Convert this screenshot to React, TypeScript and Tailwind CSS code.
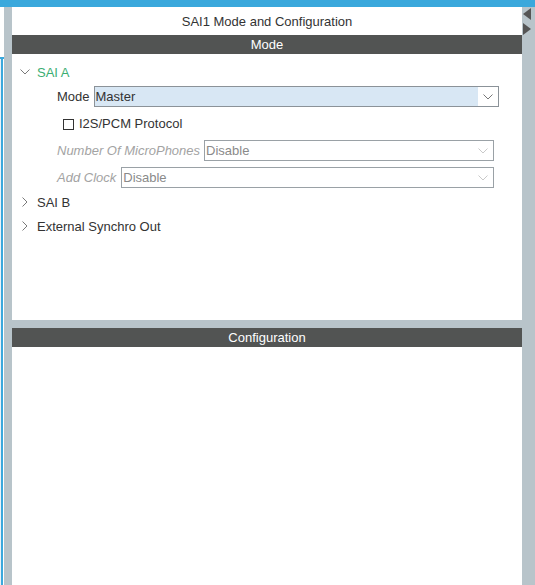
import React from "react";

const font = { fontFamily: '"Liberation Sans", Arial, sans-serif' };

const ChevronDown = ({ color = "#7a7a7a" }: { color?: string }) => (
  <svg width="10" height="6" viewBox="0 0 10 6" fill="none">
    <path d="M0.5 0.5 L5 5 L9.5 0.5" stroke={color} strokeWidth="1" />
  </svg>
);

const ChevronRight = () => (
  <svg width="6" height="10" viewBox="0 0 6 10" fill="none">
    <path d="M0.5 0.5 L5 5 L0.5 9.5" stroke="#7a7a7a" strokeWidth="1" />
  </svg>
);

type SelectProps = {
  value: string;
  active?: boolean;
};

const Select = ({ value, active }: SelectProps) => (
  <div
    className={`flex h-full flex-1 items-center border ${
      active ? "border-[#8b9298] bg-[#d8e7f4]" : "border-[#9aa1a6] bg-white"
    }`}
  >
    <span
      className={`flex-1 pl-[1px] pt-[1px] text-[13px] ${
        active ? "text-[#333333]" : "text-[#8a8a8a]"
      }`}
    >
      {value}
    </span>
    <div
      className={`flex h-full w-[20px] items-center justify-center ${
        active ? "bg-white" : ""
      }`}
    >
      <ChevronDown color={active ? "#777777" : "#c9c9c9"} />
    </div>
  </div>
);

const TreeNode = ({ label, open, green }: { label: string; open?: boolean; green?: boolean }) => (
  <div className="flex h-[24px] items-center pl-[8px]">
    <div className="flex w-[17px] items-center">
      {open ? <ChevronDown /> : <span className="pl-[2px]"><ChevronRight /></span>}
    </div>
    <span className={`pt-[1px] text-[13px] ${green ? "text-[#3aae72]" : "text-[#333333]"}`}>
      {label}
    </span>
  </div>
);

export default function App() {
  return (
    <div className="flex h-[585px] w-[535px] flex-col overflow-hidden bg-white" style={font}>
      <div className="h-[7px] bg-[#3aa8dc]" />
      <div className="flex flex-1">
        {/* left edge */}
        <div className="flex w-[4px] flex-col">
          <div className="h-[50px]" />
          <div className="h-[2px] bg-[#3aa8dc]" />
          <div className="flex flex-1">
            <div className="w-[1px] bg-[#eaf2f9]" />
            <div className="w-[2px] bg-[#3aa8dc]" />
          </div>
        </div>
        <div className="w-[8px] bg-[#b8c4ca]" />

        {/* main panel */}
        <div className="flex w-[510px] flex-col">
          <div className="flex h-[28px] items-center justify-center pt-[2px] text-[13px] text-[#333333]">
            SAI1 Mode and Configuration
          </div>
          <div className="flex h-[19px] items-center justify-center bg-[#525453] text-[13px] text-white">
            Mode
          </div>

          <div className="flex h-[266px] flex-col pt-[6px]">
            <TreeNode label="SAI A" open green />

            <div className="mt-[2px] flex h-[21px] items-center gap-[4px] pl-[45px] pr-[23px]">
              <span className="pt-[1px] text-[13px] text-[#333333]">Mode</span>
              <Select value="Master" active />
            </div>

            <div className="flex h-[33px] items-center gap-[5px] pl-[51px] pt-[1px]">
              <div className="h-[11px] w-[11px] border border-[#333333] bg-white" />
              <span className="text-[13px] text-[#333333]">I2S/PCM Protocol</span>
            </div>

            <div className="flex h-[21px] items-center gap-[4px] pl-[45px] pr-[28px]">
              <span className="pt-[1px] text-[13px] italic text-[#a3a3a3]">Number Of MicroPhones</span>
              <Select value="Disable" />
            </div>

            <div className="mt-[6px] flex h-[21px] items-center gap-[5px] pl-[45px] pr-[28px]">
              <span className="pt-[1px] text-[13px] italic text-[#a3a3a3]">Add Clock</span>
              <Select value="Disable" />
            </div>

            <div className="mt-[2px]">
              <TreeNode label="SAI B" />
            </div>
            <TreeNode label="External Synchro Out" />
          </div>

          <div className="h-[8px] bg-[#b8c4ca]" />
          <div className="flex h-[19px] items-center justify-center bg-[#525453] text-[13px] text-white">
            Configuration
          </div>
          <div className="flex-1 bg-white" />
        </div>

        {/* right strip */}
        <div className="flex w-[13px] flex-col gap-[3px] bg-[#b8c4ca] pl-[1px] pt-[1px]">
          <svg width="8" height="12" viewBox="0 0 8 12">
            <path d="M8 0 L0 6 L8 12 Z" fill="#555555" />
          </svg>
          <svg width="8" height="12" viewBox="0 0 8 12">
            <path d="M0 0 L8 6 L0 12 Z" fill="#555555" />
          </svg>
        </div>
      </div>
    </div>
  );
}
